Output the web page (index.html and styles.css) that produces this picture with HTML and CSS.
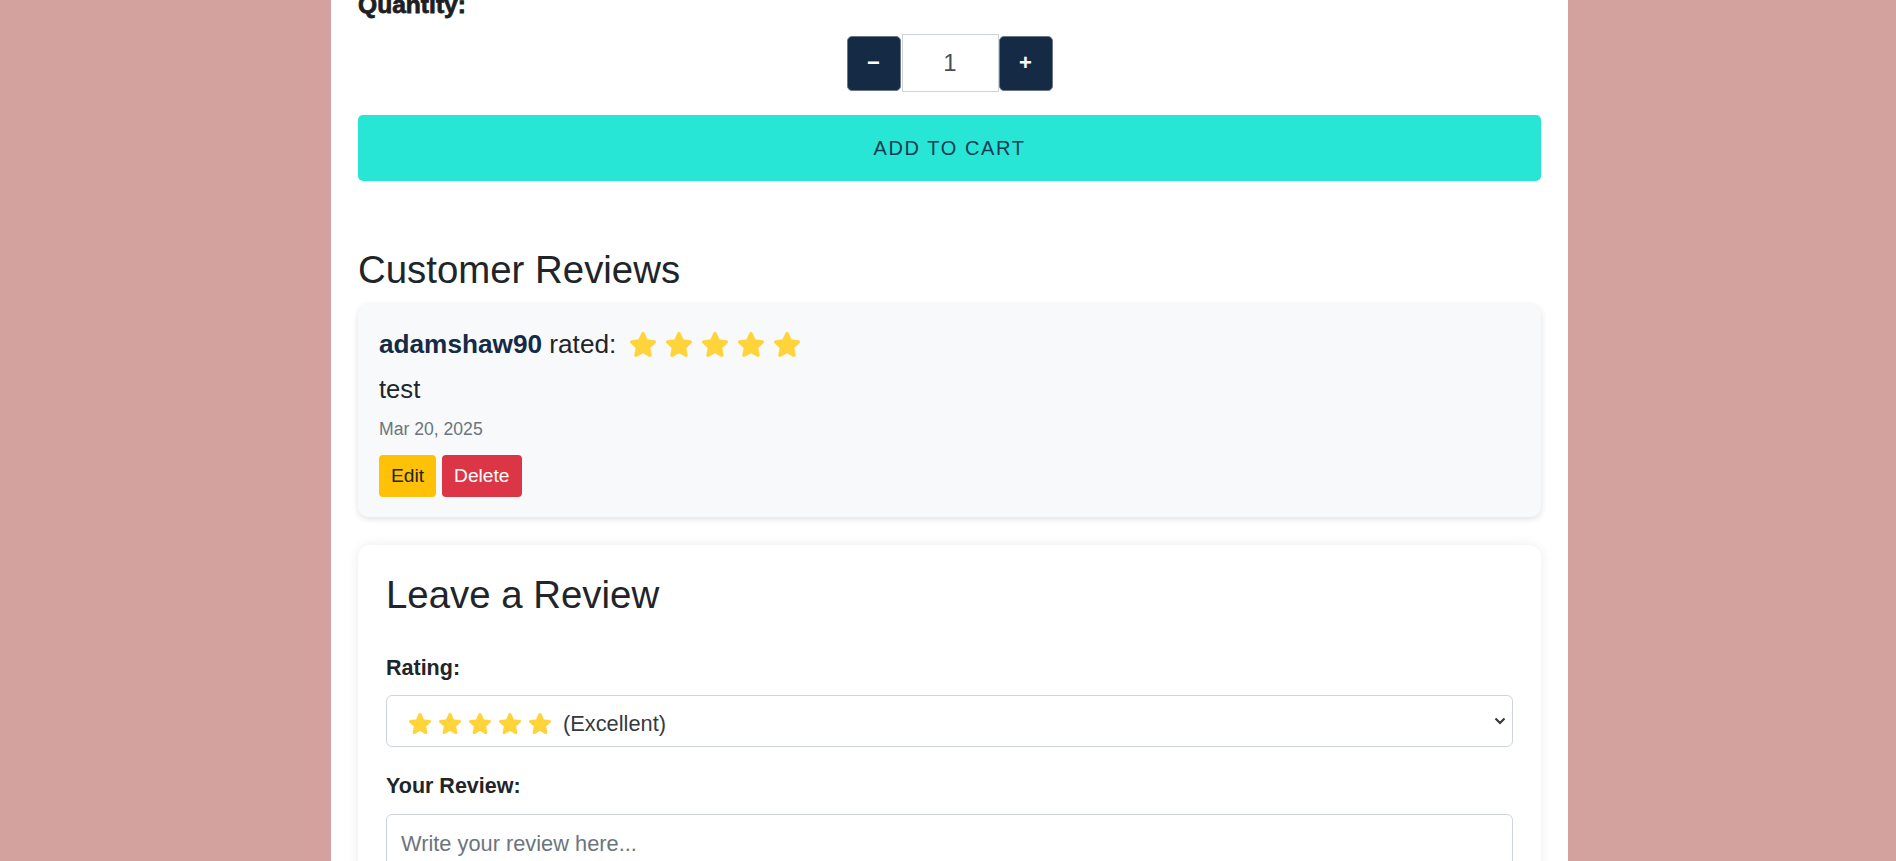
FILE: index.html
```html
<!DOCTYPE html>
<html lang="en">
<head>
<meta charset="utf-8">
<title>Product</title>
<link rel="stylesheet" href="styles.css">
</head>
<body>
<div class="page">
  <main class="container">
    <div class="qty-label">Quantity:</div>
    <div class="qty-group">
      <button class="qty-btn" type="button">&minus;</button>
      <input class="qty-input" type="text" value="1">
      <button class="qty-btn" type="button">+</button>
    </div>
    <button class="cart-btn" type="button">ADD TO CART</button>

    <section class="reviews">
      <h2 class="section-title">Customer Reviews</h2>
      <div class="review-card">
        <div class="review-head">
          <span class="who"><strong class="user">adamshaw90</strong> rated:</span>
          <span class="stars stars-lg">
            <svg viewBox="1 1.5 22 21"><polygon class="star" points="12,3 14.82,9.12 21.51,9.91 16.57,14.48 17.88,21.09 12,17.8 6.12,21.09 7.43,14.48 2.49,9.91 9.18,9.12"/></svg>
            <svg viewBox="1 1.5 22 21"><polygon class="star" points="12,3 14.82,9.12 21.51,9.91 16.57,14.48 17.88,21.09 12,17.8 6.12,21.09 7.43,14.48 2.49,9.91 9.18,9.12"/></svg>
            <svg viewBox="1 1.5 22 21"><polygon class="star" points="12,3 14.82,9.12 21.51,9.91 16.57,14.48 17.88,21.09 12,17.8 6.12,21.09 7.43,14.48 2.49,9.91 9.18,9.12"/></svg>
            <svg viewBox="1 1.5 22 21"><polygon class="star" points="12,3 14.82,9.12 21.51,9.91 16.57,14.48 17.88,21.09 12,17.8 6.12,21.09 7.43,14.48 2.49,9.91 9.18,9.12"/></svg>
            <svg viewBox="1 1.5 22 21"><polygon class="star" points="12,3 14.82,9.12 21.51,9.91 16.57,14.48 17.88,21.09 12,17.8 6.12,21.09 7.43,14.48 2.49,9.91 9.18,9.12"/></svg>
          </span>
        </div>
        <p class="review-text">test</p>
        <p class="review-date">Mar 20, 2025</p>
        <div class="review-actions">
          <button class="btn btn-edit" type="button">Edit</button>
          <button class="btn btn-delete" type="button">Delete</button>
        </div>
      </div>
    </section>

    <section class="form-card">
      <h2 class="section-title">Leave a Review</h2>
      <label class="field-label label-rating">Rating:</label>
      <div class="fake-select">
        <span class="stars stars-sm">
          <svg viewBox="1 1.5 22 21"><polygon class="star" points="12,3 14.82,9.12 21.51,9.91 16.57,14.48 17.88,21.09 12,17.8 6.12,21.09 7.43,14.48 2.49,9.91 9.18,9.12"/></svg>
          <svg viewBox="1 1.5 22 21"><polygon class="star" points="12,3 14.82,9.12 21.51,9.91 16.57,14.48 17.88,21.09 12,17.8 6.12,21.09 7.43,14.48 2.49,9.91 9.18,9.12"/></svg>
          <svg viewBox="1 1.5 22 21"><polygon class="star" points="12,3 14.82,9.12 21.51,9.91 16.57,14.48 17.88,21.09 12,17.8 6.12,21.09 7.43,14.48 2.49,9.91 9.18,9.12"/></svg>
          <svg viewBox="1 1.5 22 21"><polygon class="star" points="12,3 14.82,9.12 21.51,9.91 16.57,14.48 17.88,21.09 12,17.8 6.12,21.09 7.43,14.48 2.49,9.91 9.18,9.12"/></svg>
          <svg viewBox="1 1.5 22 21"><polygon class="star" points="12,3 14.82,9.12 21.51,9.91 16.57,14.48 17.88,21.09 12,17.8 6.12,21.09 7.43,14.48 2.49,9.91 9.18,9.12"/></svg>
        </span>
        <span class="select-text">(Excellent)</span>
        <svg class="chevron" viewBox="0 0 12 8"><polyline points="1.5,1.5 6,6 10.5,1.5"/></svg>
      </div>
      <label class="field-label label-review">Your Review:</label>
      <textarea class="review-input" placeholder="Write your review here..."></textarea>
    </section>
  </main>
</div>
</body>
</html>
```

FILE: styles.css
```css
html, body {
  margin: 0;
  height: 100%;
  overflow: hidden;
}
body {
  background: #d4a29e;
  font-family: "Liberation Sans", Arial, sans-serif;
  color: #212529;
}
.page {
  padding-left: 3px;
  height: 100%;
}
.container {
  box-sizing: border-box;
  width: 1237px;
  margin: 0 auto;
  min-height: 100%;
  background: #ffffff;
  padding: 0 27px 40px 27px;
  display: flex;
  flex-direction: column;
}
.qty-label {
  margin-top: -9px;
  font-size: 24.6px;
  line-height: 28px;
  font-weight: 700;
  color: #1d1f24;
  -webkit-text-stroke: 0.8px #1d1f24;
}
.qty-group {
  margin-top: 15px;
  display: flex;
  justify-content: center;
  align-items: center;
}
.qty-btn {
  box-sizing: border-box;
  width: 54px;
  height: 55px;
  background: #152a45;
  color: #ffffff;
  border: 1px solid #6b7686;
  border-radius: 5px;
  font-family: "Liberation Sans", Arial, sans-serif;
  font-size: 22px;
  font-weight: 700;
  padding: 0;
}
.qty-input {
  box-sizing: border-box;
  width: 97px;
  height: 58px;
  margin-left: 1px;
  border: 1px solid #ced4da;
  text-align: center;
  font-family: "Liberation Sans", Arial, sans-serif;
  font-size: 24px;
  color: #495057;
  padding: 0;
  outline: none;
}
.cart-btn {
  margin-top: 23px;
  width: 100%;
  height: 66px;
  background: #27e6d6;
  border: none;
  border-radius: 5px;
  font-family: "Liberation Sans", Arial, sans-serif;
  font-size: 20px;
  letter-spacing: 1.6px;
  color: #173b52;
}
.reviews {
  margin-top: 66px;
}
.section-title {
  margin: 0;
  font-size: 38.4px;
  line-height: 46px;
  font-weight: 400;
  color: #212529;
}
.review-card {
  margin-top: 11px;
  background: #f8f9fa;
  border-radius: 10px;
  padding: 21px 21px 20px 21px;
  box-shadow: 0 2px 6px rgba(0, 0, 0, 0.12);
}
.review-head {
  display: flex;
  align-items: center;
  font-size: 26.2px;
  line-height: 38.4px;
}
.user {
  color: #152a45;
}
.stars {
  display: flex;
  align-items: center;
}
.star {
  fill: #ffd43b;
  stroke: #ffd43b;
  stroke-width: 3;
  stroke-linejoin: round;
}
.stars-lg {
  margin-left: 14px;
  gap: 10px;
}
.stars-lg svg {
  width: 26px;
  height: 24.8px;
  display: block;
}
.review-text {
  margin: 6.6px 0 0 0;
  font-size: 25.6px;
  line-height: 38.4px;
}
.review-date {
  margin: 7.3px 0 0 0;
  font-size: 17.6px;
  line-height: 26.4px;
  color: #6c757d;
}
.review-actions {
  margin-top: 13px;
  display: flex;
  gap: 6px;
}
.btn {
  border: none;
  border-radius: 4px;
  font-family: "Liberation Sans", Arial, sans-serif;
  font-size: 19.2px;
  line-height: 22px;
  padding: 10px 12px;
}
.btn-edit {
  background: #ffc107;
  color: #212529;
}
.btn-delete {
  background: #dc3545;
  color: #ffffff;
}
.form-card {
  margin-top: 28px;
  background: #ffffff;
  border-radius: 12px;
  padding: 27px 28px 40px 28px;
  box-shadow: 0 0 12px rgba(0, 0, 0, 0.08);
}
.field-label {
  display: block;
  font-size: 21.5px;
  line-height: 32.25px;
  font-weight: 700;
  color: #212529;
  margin-bottom: 11.3px;
}
.label-rating {
  margin-top: 33.4px;
}
.label-review {
  margin-top: 23.4px;
}
.fake-select {
  box-sizing: border-box;
  height: 52px;
  border: 1px solid #ced4da;
  border-radius: 6px;
  display: flex;
  align-items: center;
  padding: 5px 6px 0 22px;
}
.stars-sm {
  gap: 8px;
}
.stars-sm svg {
  width: 22px;
  height: 21px;
  display: block;
}
.select-text {
  margin-left: 12px;
  font-size: 21.8px;
  color: #343a40;
}
.chevron {
  margin-left: auto;
  width: 12px;
  height: 8px;
  margin-top: -5px;
  fill: none;
  stroke: #343a40;
  stroke-width: 2.2;
}
.review-input {
  display: block;
  box-sizing: border-box;
  width: 100%;
  height: 150px;
  border: 1px solid #ced4da;
  border-radius: 6px;
  padding: 13px 14px;
  font-family: "Liberation Sans", Arial, sans-serif;
  font-size: 21.8px;
  line-height: 1.5;
  color: #212529;
  resize: vertical;
}
.review-input::placeholder {
  color: #6c757d;
}
```
